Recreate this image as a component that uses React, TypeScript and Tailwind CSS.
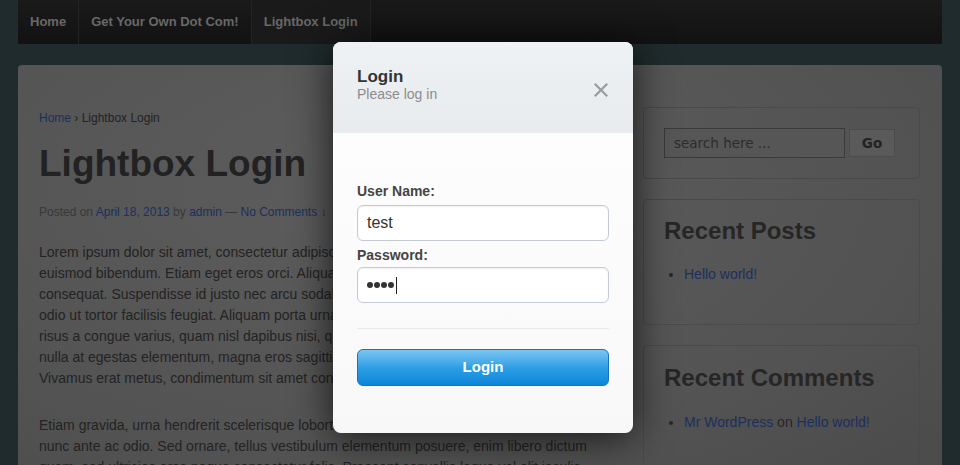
import React from 'react';

const font = { fontFamily: '"Liberation Sans", Arial, sans-serif' };

const navItems = ['Home', 'Get Your Own Dot Com!', 'Lightbox Login'];

const para1 = [
  'Lorem ipsum dolor sit amet, consectetur adipiscing elit. Sed eu velit ut mauris',
  'euismod bibendum. Etiam eget eros orci. Aliquam erat volutpat. Nam at lectus',
  'consequat. Suspendisse id justo nec arcu sodales tincidunt. Nullam in mauris',
  'odio ut tortor facilisis feugiat. Aliquam porta urna sed ante mollis, a luctus',
  'risus a congue varius, quam nisl dapibus nisi, quis tempus lorem nisl eget',
  'nulla at egestas elementum, magna eros sagittis diam, vitae imperdiet lectus',
  'Vivamus erat metus, condimentum sit amet consequat vel, ultrices id erat.',
];

const para2 = [
  'Etiam gravida, urna hendrerit scelerisque lobortis, sem nisl placerat nisi, at',
  'nunc ante ac odio. Sed ornare, tellus vestibulum elementum posuere, enim libero dictum',
  'quam, sed ultricies eros neque consectetur felis. Praesent convallis leque vel elit iaculis',
];

const Widget: React.FC<{ className?: string; children: React.ReactNode }> = ({ className, children }) => (
  <div className={`rounded-[4px] border border-[#4a4a4a] px-[20px] ${className ?? ''}`}>{children}</div>
);

export default function App() {
  return (
    <div className="relative h-[465px] w-[960px] overflow-hidden bg-[#1f2b2c]" style={font}>
      {/* Top navigation */}
      <div className="mx-[18px] flex h-[44px] bg-gradient-to-b from-[#1a1a1a] to-[#121212] text-[13px] font-bold text-[#686868]">
        {navItems.map((item, i) => (
          <div
            key={item}
            className={`flex items-center border-r border-[#232323] px-[12px] ${i === 2 ? 'bg-[#1a1a1a]' : ''}`}
          >
            {item}
          </div>
        ))}
      </div>

      {/* Page panel */}
      <div className="mx-[18px] mt-[21px] flex h-[420px] rounded-t-[4px] bg-[radial-gradient(ellipse_at_40%_30%,#5d5d5d,#545454_60%,#4a4a4a)] pl-[21px] pr-[22px] pt-[36px]">
        {/* Main column */}
        <div className="w-[583px] shrink-0 pt-[9px]">
          <div className="text-[12px] leading-[16px] text-[#222]">
            <span className="text-[#1a305f]">Home</span> › Lightbox Login
          </div>
          <h1 className="mt-[17px] text-[37px] font-bold leading-[42px] text-[#222]">Lightbox Login</h1>
          <div className="mt-[19px] text-[12px] leading-[16px] text-[#383838]">
            Posted on <span className="text-[#1a305f]">April 18, 2013</span> by{' '}
            <span className="text-[#1a305f]">admin</span> — <span className="text-[#1a305f]">No Comments ↓</span>
          </div>
          <p className="mt-[22px] whitespace-nowrap text-[14px] leading-[21px] text-[#232323]">
            {para1.map((l) => (
              <span key={l} className="block">{l}</span>
            ))}
          </p>
          <p className="mt-[26px] whitespace-nowrap text-[14px] leading-[21px] text-[#232323]">
            {para2.map((l) => (
              <span key={l} className="block">{l}</span>
            ))}
          </p>
        </div>

        {/* Sidebar */}
        <div className="ml-[21px] flex w-[282px] flex-col gap-[20px] pt-[6px]">
          <Widget className="flex h-[72px] items-center gap-[4px]">
            <div className="flex h-[30px] w-[181px] items-center border border-[#3a3a3a] bg-[#565656] px-[9px] text-[#2c2c2c]" style={{ fontFamily: '"DejaVu Sans", Verdana, sans-serif', fontSize: 13.5 }}>
              search here ...
            </div>
            <div className="flex h-[28px] w-[46px] items-center justify-center border border-[#4c4c4c] bg-[#5a5a5a] font-bold text-[#222]" style={{ fontFamily: '"DejaVu Sans", Verdana, sans-serif', fontSize: 13.5 }}>
              Go
            </div>
          </Widget>
          <Widget className="h-[127px] pt-[17px]">
            <h2 className="text-[24px] font-bold leading-[28px] text-[#262626]">Recent Posts</h2>
            <ul className="mt-[19px] list-disc pl-[20px] text-[14px] leading-[20px] text-[#262626]">
              <li><span className="text-[#1a305f]">Hello world!</span></li>
            </ul>
          </Widget>
          <Widget className="h-[140px] pt-[18px]">
            <h2 className="text-[24px] font-bold leading-[28px] text-[#262626]">Recent Comments</h2>
            <ul className="mt-[20px] list-disc pl-[20px] text-[14px] leading-[20px] text-[#262626]">
              <li>
                <span className="text-[#1a305f]">Mr WordPress</span> on <span className="text-[#1a305f]">Hello world!</span>
              </li>
            </ul>
          </Widget>
        </div>
      </div>

      {/* Login lightbox */}
      <div className="absolute left-[333px] top-[42px] h-[391px] w-[300px] overflow-hidden rounded-[8px] bg-gradient-to-b from-[#ffffff] to-[#f8f8f8] shadow-[0_4px_40px_rgba(0,0,0,0.75)]">
        <div className="flex h-[91px] items-start justify-between bg-gradient-to-b from-[#eff2f5] to-[#e8ebee] px-[24px] pt-[25px]">
          <div>
            <div className="text-[17px] font-bold leading-[20px] text-[#333]">Login</div>
            <div className="text-[14px] leading-[15px] text-[#8c8c8c]">Please log in</div>
          </div>
          <svg width="14" height="14" viewBox="0 0 14 14" className="mr-[1px] mt-[16px]">
            <path d="M1.5 1.5 L12.5 12.5 M12.5 1.5 L1.5 12.5" stroke="#9b9b9b" strokeWidth="2.2" strokeLinecap="square" />
          </svg>
        </div>
        <div className="px-[24px] pt-[50px]">
          <label className="block text-[14px] font-bold leading-[16px] text-[#444]">User Name:</label>
          <div className="mt-[6px] flex h-[36px] items-center rounded-[6px] border border-[#c3cad5] bg-white px-[9px] text-[16px] text-[#333] shadow-[inset_0_1px_2px_rgba(0,0,0,0.06)]">
            test
          </div>
          <label className="mt-[6px] block text-[14px] font-bold leading-[16px] text-[#444]">Password:</label>
          <div className="mt-[4px] flex h-[36px] items-center rounded-[6px] border border-[#c3cad5] bg-white px-[9px] shadow-[inset_0_1px_2px_rgba(0,0,0,0.06)]">
            <div className="flex gap-[1px]">
              {[0, 1, 2, 3].map((d) => (
                <span key={d} className="h-[6px] w-[6px] rounded-full bg-[#333]" />
              ))}
            </div>
            <span className="ml-[2px] h-[17px] w-[1px] bg-[#222]" />
          </div>
          <div className="mt-[25px] h-[1px] bg-[#e9e9e9]" />
          <div className="mt-[20px] flex h-[37px] items-center justify-center rounded-[6px] border border-[#1b72bd] bg-gradient-to-b from-[#7ac6f1] via-[#2c9fe6] to-[#0a86da] text-[15px] font-bold text-white">
            Login
          </div>
        </div>
      </div>
    </div>
  );
}
